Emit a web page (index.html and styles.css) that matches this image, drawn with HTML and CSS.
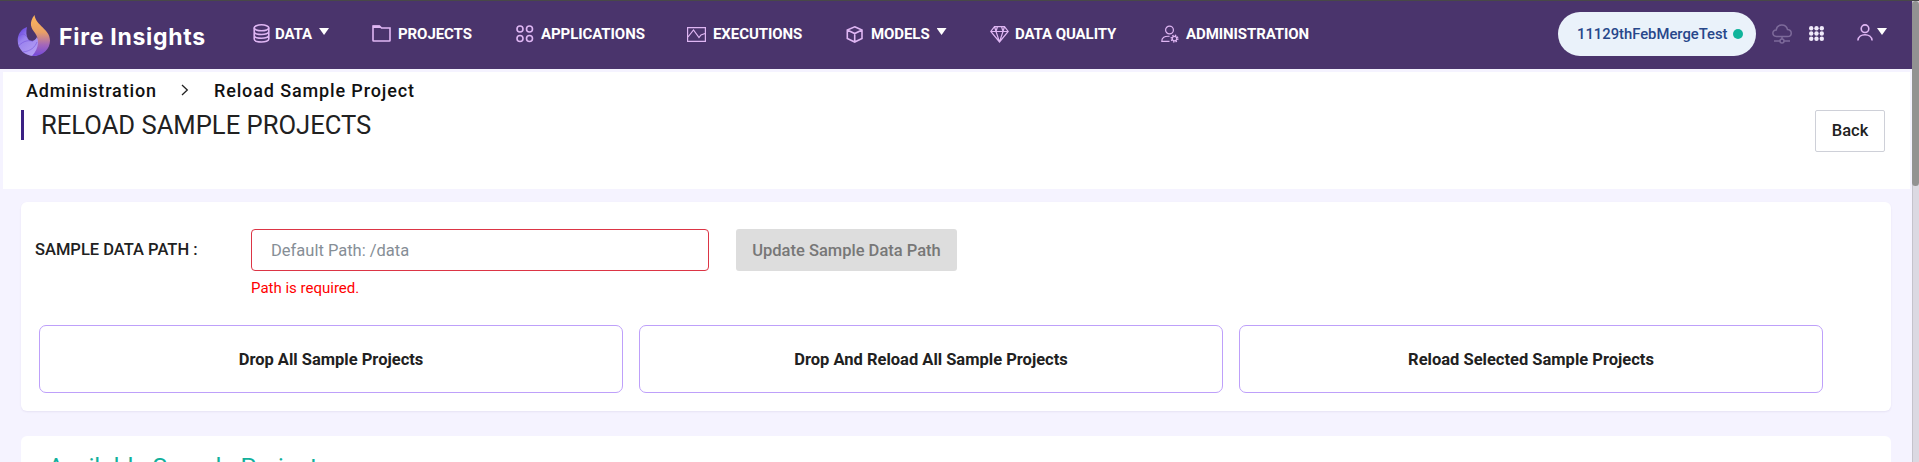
FILE: index.html
```html
<!DOCTYPE html>
<html lang="en">
<head>
<meta charset="utf-8">
<title>Fire Insights</title>
<link rel="stylesheet" href="styles.css">
</head>
<body>
<div class="app">
  <div class="page">
    <header class="navbar">
      <a class="brand">
        <svg class="brand-logo" width="34" height="42" viewBox="0 0 34 42">
          <defs>
            <linearGradient id="flame" x1="0" y1="0" x2="0" y2="1"><stop offset="0" stop-color="#ffb75a"/><stop offset=".42" stop-color="#e9a066"/><stop offset=".72" stop-color="#a568b8"/><stop offset="1" stop-color="#7449dc"/></linearGradient>
            <linearGradient id="swirl" x1="0" y1="0" x2=".7" y2="1"><stop offset="0" stop-color="#5730dc"/><stop offset=".4" stop-color="#9a82ee"/><stop offset="1" stop-color="#b5a0f4"/></linearGradient>
          </defs>
          <path d="M10 12C4 14 .7 19.500 .7 25.500C.7 34.500 8 41 17 41C25 41 25 31 20 22C18 26.500 13 27 11 24C9 21 9 16 10 12Z" fill="url(#swirl)"/>
          <path d="M17.500 0C11.500 8 14 13 18 18C22 24 23 32 15 41C26 41.500 33 34 33 25.500C33 14 19 11 17.500 0Z" fill="url(#flame)"/>
          <path d="M2 21C6 18 8 19 10 22M1.500 31C7 25 13 25 16 26.500M6 37C14 36 18 32 20 27" fill="none" stroke="#7655dc" stroke-width="1" opacity=".6"/>
        </svg>
        <span class="brand-name">Fire Insights</span>
      </a>
      <nav class="menu">
        <a class="item data">
          <svg width="18" height="19" viewBox="0 0 18 19"><g class="line"><ellipse cx="8.500" cy="3.800" rx="7.300" ry="3"/><path d="M1.200 3.800V15C1.200 19 15.800 19 15.800 15V3.800M1.200 7.500C1.200 11.500 15.800 11.500 15.800 7.500M1.200 11.300C1.200 15.300 15.800 15.300 15.800 11.300"/></g></svg>
          <span>DATA</span><i class="caret"></i>
        </a>
        <a class="item projects">
          <svg width="19" height="19" viewBox="0 0 19 19"><path class="line" d="M1 16.500V2H7.500L9.500 4H18V16.500Q18 17 17.500 17H1.500Q1 17 1 16.500Z"/><path d="M1 1.500H7.500L9.500 4H1Z" fill="#dfb6f3"/></svg>
          <span>PROJECTS</span>
        </a>
        <a class="item applications">
          <svg width="18" height="19" viewBox="0 0 18 19"><g class="line"><circle cx="4" cy="5" r="3"/><circle cx="13.500" cy="5" r="3"/><circle cx="4" cy="14.500" r="3"/><circle cx="13.500" cy="14.500" r="3"/></g></svg>
          <span>APPLICATIONS</span>
        </a>
        <a class="item executions">
          <svg width="19" height="19" viewBox="0 0 19 19"><path class="line thin" d="M.6 3.600H18.400V17.400H.6ZM1 13L6.500 6L12 13.500L14 11L18 9.500"/></svg>
          <span>EXECUTIONS</span>
        </a>
        <a class="item models">
          <svg width="18" height="19" viewBox="0 0 18 19"><path class="line" d="M8.700 2.800L16 6V14.500L8.700 18L1.300 14.500V6ZM1.300 6L8.700 9.500L16 6M8.700 9.500V18"/></svg>
          <span>MODELS</span><i class="caret"></i>
        </a>
        <a class="item quality">
          <svg width="19" height="19" viewBox="0 0 19 19"><path class="line thin" d="M4.500 2.600H14.500L18.200 7.500L9.500 18L.8 7.500ZM.8 7.500H18.200M4.500 2.500L6 7.500L9.500 18L13 7.500L14.500 2.500M6 7.500L7.500 2.500M13 7.500L11.500 2.500"/></svg>
          <span>DATA QUALITY</span>
        </a>
        <a class="item admin">
          <svg width="18" height="19" viewBox="0 0 18 19"><g class="line thin"><circle cx="8.500" cy="6" r="3.900"/><path d="M8.500 17.400H.8C.6 13.400 3.500 12 8.500 12.300"/><circle cx="13.500" cy="14.600" r="2.300"/><circle cx="13.500" cy="14.600" r="3.400" stroke-width="1.300" stroke-dasharray="1.400 1.270"/></g></svg>
          <span>ADMINISTRATION</span>
        </a>
      </nav>
      <div class="tools">
        <div class="pill"><span>11129thFebMergeTest</span><i class="dot"></i></div>
        <svg class="cloud" width="20" height="20" viewBox="0 0 20 20"><g fill="none" stroke="#7d6a9a" stroke-width="1.500"><path d="M4.500 12.500C-.3 12-.3 6 4.200 6C5-.5 14-.5 15.500 5.500C20.500 6 20.500 12.500 15.500 12.500ZM10 12.500V15M2 17H8M12 17H18"/><circle cx="10" cy="17" r="2"/></g></svg>
        <svg class="grid" width="15" height="15" viewBox="0 0 15 15"><g fill="#f0eafa"><circle cx="2.200" cy="2.200" r="2.200"/><circle cx="7.500" cy="2.200" r="2.200"/><circle cx="12.800" cy="2.200" r="2.200"/><circle cx="2.200" cy="7.500" r="2.200"/><circle cx="7.500" cy="7.500" r="2.200"/><circle cx="12.800" cy="7.500" r="2.200"/><circle cx="2.200" cy="12.800" r="2.200"/><circle cx="7.500" cy="12.800" r="2.200"/><circle cx="12.800" cy="12.800" r="2.200"/></g></svg>
        <svg class="user" width="16" height="17" viewBox="0 0 16 17"><g class="line"><circle cx="8" cy="4.700" r="3.800"/><path d="M.9 16.500C1.500 8.800 14.500 8.800 15.100 16.500"/></g></svg>
        <i class="caret"></i>
      </div>
    </header>

    <section class="heading">
      <div class="crumbs">
        <span>Administration</span>
        <svg width="8" height="12" viewBox="0 0 8 12"><path d="M1 1L6.300 6L1 11" fill="none" stroke="#222" stroke-width="1.300"/></svg>
        <span>Reload Sample Project</span>
      </div>
      <div class="title-row">
        <h1>RELOAD SAMPLE PROJECTS</h1>
        <button class="back">Back</button>
      </div>
    </section>

    <main class="content">
      <section class="card form-card">
        <div class="form">
          <label class="label" for="path">SAMPLE DATA PATH :</label>
          <div class="field">
            <input id="path" type="text" placeholder="Default Path: /data">
            <p class="error">Path is required.</p>
          </div>
          <button class="update" disabled>Update Sample Data Path</button>
        </div>
        <div class="actions">
          <button>Drop All Sample Projects</button>
          <button>Drop And Reload All Sample Projects</button>
          <button>Reload Selected Sample Projects</button>
        </div>
      </section>
      <section class="card list-card">
        <h2>Available Sample Projects</h2>
      </section>
    </main>
  </div>
  <div class="scrollbar"><div class="thumb"></div></div>
</div>
</body>
</html>
```

FILE: styles.css
```css
* { box-sizing: border-box; }
body { margin: 0; height: 462px; overflow: hidden; background: #f5f3ff; color: #212121; font-family: Roboto, sans-serif; font-size: 16.5px; }
h1, h2, p { margin: 0; }
button, input { font: inherit; color: inherit; padding: 0; }
svg { flex: none; display: block; }

.app { display: flex; height: 462px; border-top: 1px solid #484848; }
.page { width: 1912px; flex: none; overflow: hidden; }
.scrollbar { width: 7px; background: #dbd9e2; border-left: 1px solid #c5c3cc; }
.thumb { height: 185px; margin-left: -1px; background: #929292; border-radius: 4px; }

.navbar { display: flex; height: 68px; background: #4a346c; color: #fff; }
.line { fill: none; stroke: #dfb6f3; stroke-width: 1.6; }
.thin { stroke-width: 1.2; }
.brand { display: flex; width: 253px; padding: 14px 0 0 17px; }
.brand-name { margin: 8px 0 0 8px; font: 700 23px/28px Inter, sans-serif; letter-spacing: .72px; white-space: nowrap; }
.menu { display: flex; width: 1305px; padding-top: 23px; font-weight: 700; font-size: 15px; line-height: 20px; letter-spacing: -.08px; }
.item { display: flex; height: 20px; white-space: nowrap; }
.item span { margin: 0 0 0 7px; }
.caret { width: 10px; height: 7px; margin-top: 4px; background: #fff; clip-path: polygon(0 0, 100% 0, 50% 100%); }
.item .caret { margin-left: 7px; }
.data { width: 119px; }
.data span { margin-left: 4px; }
.projects { width: 144px; }
.applications { width: 171px; }
.executions { width: 159px; }
.models { width: 144px; }
.quality { width: 171px; }
.quality span { margin-left: 6px; }

.tools { display: flex; }
.pill { display: flex; align-items: center; width: 198px; height: 44px; margin-top: 11px; padding-left: 19px; border-radius: 22px; background: #eaf2fa; color: #27478a; font-size: 14.8px; font-weight: 500; }
.dot { width: 10px; height: 10px; margin-left: 5px; border-radius: 50%; background: #10b49b; }
.cloud { margin: 23px 0 0 16px; }
.grid { margin: 25px 0 0 17px; }
.user { margin: 23px 0 0 33px; }
.tools .caret { margin: 27px 0 0 4px; }

.heading { height: 117px; margin: 3px 2px 0 3px; padding: 6px 25px 0 18px; background: #fff; }
.crumbs { display: flex; align-items: center; height: 24px; padding-left: 5px; color: #111; font-size: 18px; font-weight: 500; letter-spacing: .87px; }
.crumbs svg { margin: 0 25px 0 24px; }
.title-row { display: flex; justify-content: space-between; margin-top: 8px; }
h1 { height: 30px; padding-left: 17px; border-left: 3px solid #3b2184; font-size: 25.6px; font-weight: 400; line-height: 31px; }
.back { width: 70px; height: 42px; padding-bottom: 1px; background: #fff; border: 1px solid #ced0d8; border-radius: 2px; font-weight: 500; }

.content { padding: 13px 21px 0; }
.card { background: #fff; border-radius: 6px; }
.form-card { height: 209px; padding: 27px 68px 0 14px; box-shadow: 0 1px 2px rgba(60, 40, 110, .08); }
.form { display: flex; height: 96px; }
.label { width: 216px; padding-top: 11px; font-weight: 500; line-height: 20px; }
.field { width: 458px; }
.field input { width: 100%; height: 42px; padding-left: 19px; border: 1px solid #dc3545; border-radius: 4px; background: #fff; }
.field input::placeholder { color: #868e96; opacity: 1; }
.error { margin-top: 7px; color: #f00; font-size: 15px; line-height: 20px; }
.update { width: 221px; height: 42px; margin-left: 27px; border: 0; border-radius: 3px; background: #ddd; color: #777; font-weight: 500; }
.actions { display: flex; gap: 16px; padding-left: 4px; }
.actions button { width: 584px; height: 68px; background: #fff; border: 1px solid #bea0fa; border-radius: 7px; font-weight: 700; }
.list-card { height: 200px; margin-top: 25px; padding: 17px 27px; }
h2 { color: #12b09b; font-size: 24.5px; font-weight: 400; line-height: 28px; }
```
